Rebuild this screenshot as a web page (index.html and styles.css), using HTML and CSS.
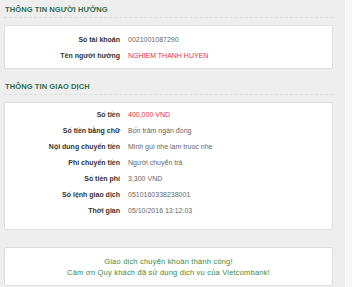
FILE: index.html
```html
<!DOCTYPE html>
<html>
<head>
<meta charset="utf-8">
<link rel="stylesheet" href="styles.css">
</head>
<body>
<div class="page">
  <div class="section-head first">THÔNG TIN NGƯỜI HƯỞNG</div>
  <div class="card">
    <div class="row"><div class="label">Số tài khoản</div><div class="value">0021001087290</div></div>
    <div class="row"><div class="label">Tên người hưởng</div><div class="value red">NGHIEM THANH HUYEN</div></div>
  </div>
  <div class="section-head">THÔNG TIN GIAO DỊCH</div>
  <div class="card card-tx">
    <div class="row"><div class="label">Số tiền</div><div class="value red">400,000 VND</div></div>
    <div class="row"><div class="label">Số tiền bằng chữ</div><div class="value">Bốn trăm ngàn đồng</div></div>
    <div class="row"><div class="label">Nội dung chuyển tiền</div><div class="value">Minh gui nhe lam truoc nhe</div></div>
    <div class="row"><div class="label">Phí chuyển tiền</div><div class="value">Người chuyển trả</div></div>
    <div class="row"><div class="label">Số tiền phí</div><div class="value">3,300 VND</div></div>
    <div class="row"><div class="label">Số lệnh giao dịch</div><div class="value">0510160338238001</div></div>
    <div class="row"><div class="label">Thời gian</div><div class="value">05/10/2016 13:12:03</div></div>
  </div>
  <div class="card card-msg">
    <div>Giao dịch chuyển khoản thành công!</div>
    <div>Cảm ơn Quý khách đã sử dụng dịch vụ của Vietcombank!</div>
  </div>
</div>
</body>
</html>
```
FILE: styles.css
```css
html, body {
  margin: 0;
  padding: 0;
  background: #f6f6f6;
}
body {
  font-family: "Liberation Sans", Arial, sans-serif;
  font-size: 7px;
  color: #555;
}
.page {
  width: 346px;
  height: 287px;
  background: #eeeeee;
  border-right: 1px solid #ffffff;
  box-sizing: border-box;
  padding: 0 12px 0 4px;
  overflow: hidden;
}
.section-head {
  font-weight: bold;
  font-size: 7.5px;
  color: #2f6e4e;
  line-height: 10px;
  padding: 13px 0 2px 1px;
  border-bottom: 1px dashed #dcdcdc;
  margin-bottom: 7px;
  letter-spacing: 0.1px;
}
.section-head.first {
  padding-top: 5px;
}
.card {
  background: #ffffff;
  border: 1px solid #dedede;
  border-radius: 2px;
  padding: 5px 0;
}
.row {
  display: flex;
  gap: 8px;
  height: 16px;
  align-items: center;
}
.label {
  width: 115px;
  text-align: right;
  color: #333;
  font-weight: bold;
  font-size: 7px;
}
.value {
  color: #666;
}
.red {
  color: #e2343d;
}
.card-tx {
  padding: 3px 0 11px;
}
.card-msg {
  margin-top: 17px;
  padding: 9px 0 7px;
  text-align: center;
  color: #3d8a3d;
  font-size: 7.5px;
  line-height: 10.5px;
  letter-spacing: 0.2px;
}
```
